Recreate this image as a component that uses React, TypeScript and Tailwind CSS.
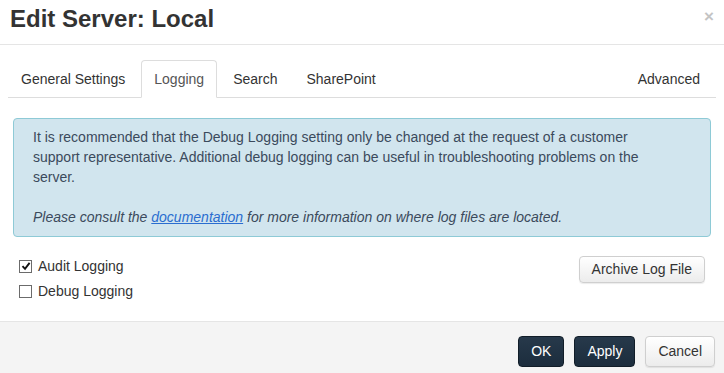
import React from "react";

const tabs = ["General Settings", "Logging", "Search", "SharePoint"];

const Checkbox = ({ checked, label }: { checked?: boolean; label: string }) => (
  <label className="flex h-[20px] items-center gap-[6px] leading-[20px]">
    <span className="flex h-[13px] w-[13px] items-center justify-center border border-[#6b6b6b] bg-white">
      {checked && (
        <svg width="10" height="10" viewBox="0 0 10 10">
          <path d="M1.5 5.2 L4 7.8 L8.6 1.8" fill="none" stroke="#111" strokeWidth="1.9" />
        </svg>
      )}
    </span>
    <span>{label}</span>
  </label>
);

const LightButton = ({ children }: { children: React.ReactNode }) => (
  <button
    type="button"
    className="rounded-[4px] border border-[#cfcfcf] bg-gradient-to-b from-white to-[#ececec] px-3 text-[14px] text-[#333] shadow-[0_1px_1px_rgba(0,0,0,0.08)]"
  >
    {children}
  </button>
);

const DarkButton = ({ children }: { children: React.ReactNode }) => (
  <button
    type="button"
    className="h-[31px] rounded-[4px] border border-[#111d28] bg-gradient-to-b from-[#27394b] to-[#1c2d3d] px-3 text-[14px] text-white"
  >
    {children}
  </button>
);

export default function App() {
  return (
    <div className="flex h-[373px] w-[724px] flex-col bg-white font-['Liberation_Sans',Arial,sans-serif] text-[14px] text-[#333]">
      {/* Header */}
      <div className="flex h-[45px] items-start justify-between border-b border-[#e5e5e5] pl-[10px] pr-[10px] pt-[5px]">
        <h1 className="text-[24px] font-bold leading-[28px] text-[#333]">Edit Server: Local</h1>
        <span className="mt-[2px] text-[17px] font-bold leading-[20px] text-[#c4c4c4]">×</span>
      </div>

      {/* Body */}
      <div className="flex-1 px-2">
        <div className="mt-[15px] flex h-[38px] border-b border-[#ddd]">
          {tabs.map((t) => (
            <div
              key={t}
              className={
                t === "Logging"
                  ? "-mb-px mr-[3px] rounded-t-[4px] border border-[#ddd] border-b-white bg-white px-3 py-[8px] leading-[20px] text-[#555]"
                  : "mr-[3px] border border-transparent px-3 py-[8px] leading-[20px]"
              }
            >
              {t}
            </div>
          ))}
          <div className="ml-auto mr-[3px] border border-transparent px-3 py-[8px] leading-[20px]">Advanced</div>
        </div>

        <div className="mx-[5px] mt-[20px] rounded-[4px] border border-[#8ecad6] bg-[#d1e5ee] pb-[9px] pl-[19px] pr-[46px] pt-[8px] leading-[20px] text-[#3b4a5c]">
          <p>
            It is recommended that the Debug Logging setting only be changed at the request of a customer
            support representative. Additional debug logging can be useful in troubleshooting problems on the
            server.
          </p>
          <p className="mt-[20px] italic">
            Please consult the{" "}
            <a href="#" className="text-[#2a6dd0] underline">
              documentation
            </a>{" "}
            for more information on where log files are located.
          </p>
        </div>

        <div className="mt-[19px] flex justify-between px-[11px]">
          <div className="flex flex-col gap-[5px]">
            <Checkbox checked label="Audit Logging" />
            <Checkbox label="Debug Logging" />
          </div>
          <div className="flex h-[27px]">
            <LightButton>Archive Log File</LightButton>
          </div>
        </div>
      </div>

      {/* Footer */}
      <div className="flex h-[52px] items-start justify-end gap-[10px] border-t border-[#e5e5e5] bg-[#f4f4f4] pr-[9px] pt-[14px]">
        <DarkButton>OK</DarkButton>
        <DarkButton>Apply</DarkButton>
        <div className="flex h-[31px]">
          <LightButton>Cancel</LightButton>
        </div>
      </div>
    </div>
  );
}
